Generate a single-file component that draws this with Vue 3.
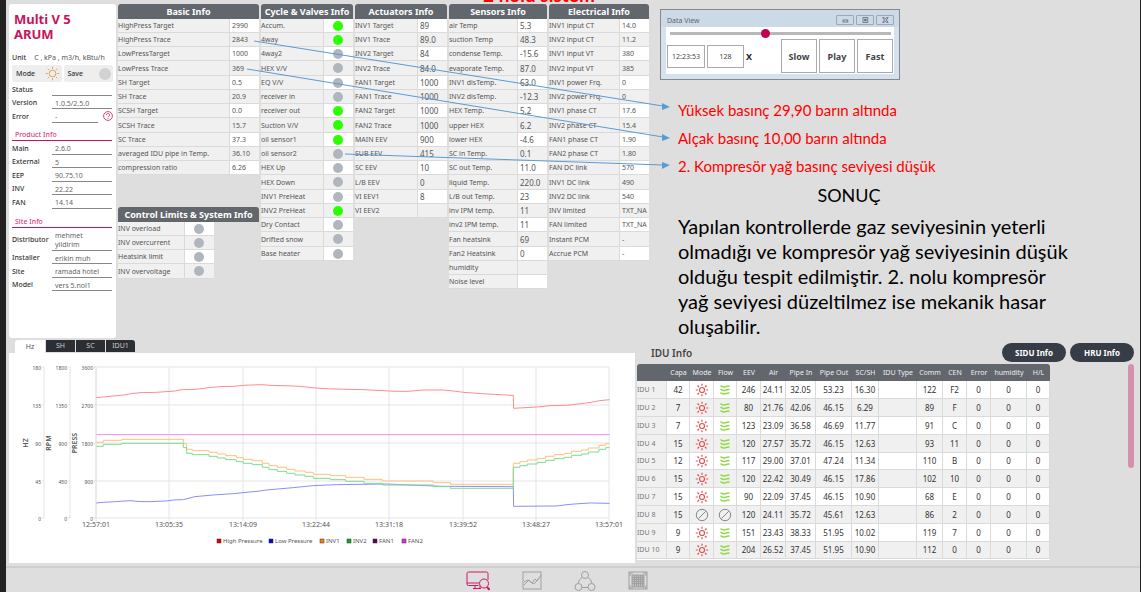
<script setup>
import { ref } from 'vue'

const unit = 'C , kPa , m3/h, kBtu/h'
const product = [['Main', '2.6.0'], ['External', '5'], ['EEP', '90.75.10'], ['INV', '22.22'], ['FAN', '14.14']]
const site = [['Distributor', 'mehmet\nyildirim'], ['Installer', 'erikin muh'], ['Site', 'ramada hotel'], ['Model', 'vers 5.nol1']]

const basic = [
  ['HighPress Target', '2990'], ['HighPress Trace', '2843'], ['LowPressTarget', '1000'], ['LowPress Trace', '369'],
  ['SH Target', '0.5'], ['SH Trace', '20.9'], ['SCSH Target', '0.0'], ['SCSH Trace', '15.7'], ['SC Trace', '37.3'],
  ['averaged IDU pipe in Temp.', '36.10'], ['compression ratio', '6.26']
]
const limits = [['INV overload', false], ['INV overcurrent', false], ['Heatsink limit', false], ['INV overvoltage', false]]
const cycle = [
  ['Accum.', true], ['4way', true], ['4way2', false], ['HEX V/V', false], ['EQ V/V', false], ['receiver in', false],
  ['receiver out', true], ['Suction V/V', true], ['oil sensor1', true], ['oil sensor2', false], ['HEX Up', false],
  ['HEX Down', false], ['INV1 PreHeat', false], ['INV2 PreHeat', true], ['Dry Contact', false],
  ['Drifted snow', false], ['Base heater', false]
]
const actuators = [
  ['INV1 Target', '89'], ['INV1 Trace', '89.0'], ['INV2 Target', '84'], ['INV2 Trace', '84.0'], ['FAN1 Target', '1000'],
  ['FAN1 Trace', '1000'], ['FAN2 Target', '1000'], ['FAN2 Trace', '1000'], ['MAIN EEV', '900'], ['SUB EEV', '415'],
  ['SC EEV', '10'], ['L/B EEV', '0'], ['VI EEV1', '8'], ['VI EEV2', '']
]
const sensors = [
  ['air Temp', '5.3'], ['suction Temp', '48.3'], ['condense Temp.', '-15.6'], ['evaporate Temp.', '87.0'],
  ['INV1 disTemp.', '63.0'], ['INV2 disTemp.', '-12.3'], ['HEX Temp.', '5.2'], ['upper HEX', '6.2'], ['lower HEX', '-4.6'],
  ['SC in Temp.', '0.1'], ['SC out Temp.', '11.0'], ['liquid Temp.', '220.0'], ['L/B out Temp.', '23'],
  ['inv IPM temp.', '11'], ['inv2 IPM temp.', '11'], ['Fan heatsink', '69'], ['Fan2 Heatsink', '0'], ['humidity', ''], ['Noise level', '']
]
const electrical = [
  ['INV1 input CT', '14.0'], ['INV2 input CT', '11.2'], ['INV1 input VT', '380'], ['INV2 input VT', '385'],
  ['INV1 power Frq.', '0'], ['INV2 power Frq.', '0'], ['INV1 phase CT', '17.6'], ['INV2 phase CT', '15.4'],
  ['FAN1 phase CT', '1.90'], ['FAN2 phase CT', '1.80'], ['FAN DC link', '570'], ['INV1 DC link', '490'],
  ['INV2 DC link', '540'], ['INV limited', 'TXT_NA'], ['FAN limited', 'TXT_NA'], ['Instant PCM', '-'], ['Accrue PCM', '-']
]
const groups = [
  { cls: 'basic', parts: [{ title: 'Basic Info', rows: basic }, { title: 'Control Limits & System Info', rows: limits, narrow: true }] },
  { cls: 'cycle', parts: [{ title: 'Cycle & Valves Info', rows: cycle }] },
  { cls: 'actuators', parts: [{ title: 'Actuators Info', rows: actuators }] },
  { cls: 'sensors', parts: [{ title: 'Sensors Info', rows: sensors }] },
  { cls: 'electrical', parts: [{ title: 'Electrical Info', rows: electrical }] }
]

const iduColumns = ['', 'Capa', 'Mode', 'Flow', 'EEV', 'Air', 'Pipe In', 'Pipe Out', 'SC/SH', 'IDU Type', 'Comm', 'CEN', 'Error', 'humidity', 'H/L']
const idu = [
  ['42', 1, '246', '24.11', '32.05', '53.23', '16.30', '122', 'F2'],
  ['7', 1, '80', '21.76', '42.06', '46.15', '6.29', '89', 'F'],
  ['7', 1, '123', '23.09', '36.58', '46.69', '11.77', '91', 'C'],
  ['15', 1, '120', '27.57', '35.72', '46.15', '12.63', '93', '11'],
  ['12', 1, '117', '29.00', '37.01', '47.24', '11.34', '110', 'B'],
  ['15', 1, '120', '22.42', '30.49', '46.15', '17.86', '102', '10'],
  ['15', 1, '90', '22.09', '37.45', '46.15', '10.90', '68', 'E'],
  ['15', 0, '120', '24.11', '35.72', '45.61', '12.63', '86', '2'],
  ['9', 1, '151', '23.43', '38.33', '51.95', '10.02', '119', '7'],
  ['9', 1, '204', '26.52', '37.45', '51.95', '10.90', '112', '0']
]

const tabs = ['Hz', 'SH', 'SC', 'IDU1']
const activeTab = ref('Hz')
const position = ref(43)
const time = ref('12:23:53')
const speed = ref('128')

const gridX = [96, 169, 243, 316, 389, 463, 536, 609]
const times = ['12:57:01', '13:05:35', '13:14:09', '13:22:44', '13:31:18', '13:39:52', '13:48:27', '13:57:01']
const gridY = [367, 405, 443, 481, 518]
const axes = [
  { x: 44, labels: ['180', '135', '90', '45', '0'], title: 'HZ', tx: 28 },
  { x: 70, labels: ['1800', '1350', '900', '450', '0'], title: 'RPM', tx: 51 },
  { x: 96, labels: ['3600', '2700', '1800', '900', '0'], title: 'PRESS', tx: 77 }
]
const legend = [
  ['High Pressure', '#e00000', 217], ['Low Pressure', '#0000f0', 269], ['INV1', '#ff8000', 320],
  ['INV2', '#00b030', 347], ['FAN1', '#5a0060', 373], ['FAN2', '#e82ce8', 402]
]
const high = '289,188 330,184 365,181 395,176 420,173 470,172 525,168 545,164 590,163 625,158 660,155 700,154 730,151 785,149 810,151 880,153 910,155 945,159 995,162 1090,164 1150,167 1185,169 1225,169 1270,165 1330,165 1360,168 1390,172 1460,177 1540,181 1541,220 1610,216 1650,212 1700,211 1760,204 1800,197 1829,194'
const low = '289,504 310,502 350,500 390,497 420,500 450,500 500,498 520,495 550,494 585,485 640,480 700,476 780,468 800,465 880,458 940,452 1010,449 1160,447 1250,451 1330,454 1540,455 1541,514 1670,513 1710,508 1770,504 1829,505'
const steps = [
  [289, 322], [310, 316], [365, 313], [550, 326], [560, 343], [577, 347], [627, 352], [652, 357], [677, 362], [709, 368],
  [730, 373], [757, 377], [787, 385], [807, 392], [832, 397], [860, 403], [885, 408], [915, 412], [940, 418], [991, 422],
  [1037, 427], [1092, 433], [1147, 438], [1300, 443], [1351, 448], [1540, 385], [1560, 380], [1582, 375], [1612, 370],
  [1637, 364], [1663, 359], [1693, 355], [1715, 349], [1745, 345], [1765, 339], [1797, 331], [1817, 326]
]
const stepPath = (dy) => steps.map(([x, y], i) => (i ? `H${x}V${y + dy}` : `M${x} ${y + dy}`)).join('') + 'H1829'
</script>

<template>
  <div class="page">
    <main>
      <div class="top">
        <aside class="side">
          <h1>Multi V 5<br />ARUM</h1>
          <p class="unit"><b>Unit</b><span>{{ unit }}</span></p>
          <div class="modes">
            <button type="button">Mode
              <svg class="sun" viewBox="0 0 16 16"><circle cx="8" cy="8" r="3.6" /><path d="M8 .8V3M8 13v2.200M.8 8H3M13 8h2.200M2.900 2.900l1.500 1.500M11.600 11.600l1.500 1.500M13.100 2.900l-1.500 1.500M4.400 11.600l-1.500 1.500" /></svg>
            </button>
            <button type="button">Save <i class="save-dot"></i></button>
          </div>
          <dl>
            <div><dt>Status</dt><dd></dd></div>
            <div><dt>Version</dt><dd>1.0.5/2.5.0</dd></div>
            <div class="error"><dt>Error</dt><dd>-</dd>
              <button type="button" class="help" aria-label="Error help"><svg viewBox="0 0 10 10"><circle cx="5" cy="5" r="4.400" /><path d="M3.500 4a1.500 1.500 0 1 1 2.300 1.200Q5 5.600 5 6.300M5 7.200v.8" /></svg></button>
            </div>
          </dl>
          <h2>Product Info</h2>
          <dl>
            <div v-for="r in product" :key="r[0]"><dt>{{ r[0] }}</dt><dd>{{ r[1] }}</dd></div>
          </dl>
          <h2 class="site-title">Site Info</h2>
          <dl class="site">
            <div v-for="r in site" :key="r[0]"><dt>{{ r[0] }}</dt><dd>{{ r[1] }}</dd></div>
          </dl>
        </aside>

        <div v-for="g in groups" :key="g.cls" class="group" :class="g.cls">
          <section v-for="p in g.parts" :key="p.title" :class="{ narrow: p.narrow }">
            <h2>{{ p.title }}</h2>
            <table>
              <tbody>
                <tr v-for="r in p.rows" :key="r[0]">
                  <th scope="row">{{ r[0] }}</th>
                  <td v-if="typeof r[1] === 'boolean'"><i class="lamp" :class="{ on: r[1] }"></i></td>
                  <td v-else>{{ r[1] }}</td>
                </tr>
              </tbody>
            </table>
          </section>
        </div>

        <div class="notes">
          <section class="window">
            <header>
              <span>Data View</span>
              <button type="button" aria-label="Minimize"><svg viewBox="0 0 18 10"><rect x="6.500" y="5" width="6" height="2.500" /></svg></button>
              <button type="button" aria-label="Maximize"><svg viewBox="0 0 18 10"><rect x="6.500" y="2" width="6" height="6" /><rect x="8.500" y="4" width="2" height="2" /></svg></button>
              <button type="button" aria-label="Close"><svg viewBox="0 0 18 10"><path d="M6 2h2l1.500 2L11 2h2l-2.300 3L13 8h-2L9.500 6 8 8H6l2.300-3z" /></svg></button>
            </header>
            <div class="pane">
              <input v-model="position" type="range" min="0" max="100" aria-label="Playback position" />
              <div class="controls">
                <input v-model="time" type="text" aria-label="Time" />
                <input id="speed" v-model="speed" type="text" aria-label="Speed" />
                <label for="speed">X</label>
                <button type="button">Slow</button>
                <button type="button">Play</button>
                <button type="button">Fast</button>
              </div>
            </div>
          </section>
          <ul>
            <li>Yüksek basınç 29,90 barın altında</li>
            <li>Alçak basınç 10,00 barın altında</li>
            <li>2. Kompresör yağ basınç seviyesi düşük</li>
          </ul>
          <h3>SONUÇ</h3>
          <p>Yapılan kontrollerde gaz seviyesinin yeterli<br />olmadığı ve kompresör yağ seviyesinin düşük<br />olduğu tespit edilmiştir. 2. nolu kompresör<br />yağ seviyesi düzeltilmez ise mekanik hasar<br />oluşabilir.</p>
        </div>

        <svg class="arrows" viewBox="0 0 1134 338" preserveAspectRatio="none">
          <path class="line" d="M248 41L657 106M241 69L657 137M339 154L657 165" />
          <path class="head" d="M664 107l-8-4v7zM664 138l-8-4v7zM664 165l-8-3v7z" />
        </svg>
        <div class="caption">2 nolu sistem</div>
      </div>

      <div class="bottom">
        <section class="trend">
          <nav>
            <button v-for="t in tabs" :key="t" type="button" :class="{ active: t === activeTab }" @click="activeTab = t">{{ t }}</button>
          </nav>
          <svg class="chart" viewBox="9 353 626 210">
            <g class="grid">
              <path v-for="x in gridX" :key="'x' + x" :d="`M${x} 367V521`" />
              <path v-for="y in gridY" :key="'y' + y" :d="`M94 ${y}H609`" />
            </g>
            <g v-for="a in axes" :key="a.title">
              <path class="axis" :d="`M${a.x} 367V518`" />
              <path v-for="y in gridY" :key="y" class="axis" :d="`M${a.x - 2} ${y}h2`" />
              <text v-for="(l, i) in a.labels" :key="i" class="tick" :x="a.x - 3" :y="gridY[i] + 3">{{ l }}</text>
              <text class="name" :transform="`translate(${a.tx} 443) rotate(-90)`">{{ a.title }}</text>
            </g>
            <text v-for="(t, i) in times" :key="i" class="time" :x="gridX[i]" y="527">{{ t }}</text>
            <g class="series" transform="translate(0 335) scale(.3333)">
              <polyline :points="high" stroke="#ff8c8c" />
              <path d="M289 299H1829" stroke="#f08cf0" />
              <path :d="stepPath(0)" stroke="#ffc07c" />
              <polyline :points="low" stroke="#8c8cff" />
              <path :d="stepPath(12)" stroke="#7cdc94" />
            </g>
            <g v-for="l in legend" :key="l[0]">
              <rect :x="l[2]" y="539" width="4" height="4" :fill="l[1]" stroke="#333" stroke-width=".5" />
              <text class="key" :x="l[2] + 6" y="543">{{ l[0] }}</text>
            </g>
          </svg>
        </section>

        <section class="idu">
          <header>
            <h2>IDU Info</h2>
            <button type="button">SIDU Info</button>
            <button type="button">HRU Info</button>
          </header>
          <div class="scroller">
            <table>
              <colgroup><col v-for="(c, i) in iduColumns" :key="i" :class="'c' + i" /></colgroup>
              <thead><tr><th v-for="c in iduColumns" :key="c" scope="col">{{ c }}</th></tr></thead>
              <tbody>
                <tr v-for="(r, i) in idu" :key="i">
                  <th scope="row">IDU {{ i + 1 }}</th>
                  <td>{{ r[0] }}</td>
                  <td>
                    <svg v-if="r[1]" class="heat" viewBox="0 0 14 14"><circle cx="7" cy="7" r="2.500" /><path d="M7 .8v2M7 11.200v2M.8 7h2M11.200 7h2M2.500 2.500l1.500 1.500M10 10l1.500 1.500M11.500 2.500L10 4M4 10l-1.500 1.500" /></svg>
                    <svg v-else class="off" viewBox="0 0 14 14"><circle cx="7" cy="7" r="5.700" /><path d="M3.500 10.500l7-7" /></svg>
                  </td>
                  <td>
                    <svg v-if="r[1]" class="flow" viewBox="0 0 14 14"><path d="M2.500 2.500q2 2.200 4.500 1.300t4.500-.8M2.500 6q2 2.200 4.500 1.300t4.500-.8M2.500 9.500q2 2.200 4.500 1.300t4.500-.8" /></svg>
                    <svg v-else class="off" viewBox="0 0 14 14"><circle cx="7" cy="7" r="5.700" /><path d="M3.500 10.500l7-7" /></svg>
                  </td>
                  <td>{{ r[2] }}</td><td>{{ r[3] }}</td><td>{{ r[4] }}</td><td>{{ r[5] }}</td><td>{{ r[6] }}</td>
                  <td></td><td>{{ r[7] }}</td><td>{{ r[8] }}</td><td>0</td><td>0</td><td>0</td>
                </tr>
              </tbody>
            </table>
            <i class="thumb"></i>
          </div>
        </section>
      </div>
    </main>

    <footer>
      <button type="button" class="current" aria-label="Monitoring"><svg viewBox="0 0 24 20"><path d="M12.500 14.500H2.500a1.500 1.500 0 0 1-1.500-1.500V2.500A1.500 1.500 0 0 1 2.500 1h18A1.500 1.500 0 0 1 22 2.500V9M1 12h12M9 14.500v3M14 14.500v3M7 17.500h8" /><circle cx="18" cy="12.500" r="4.500" /><path d="M21 16l2.500 2.800" stroke-width="2" /></svg></button>
      <button type="button" aria-label="Trend graph"><svg viewBox="0 0 20 20"><rect x="1" y="1" width="18" height="17" /><path d="M2 11l4-2 4 3 3-4 2 2 4-6M2 14l5-5 4 4 2-1 4-5" /></svg></button>
      <button type="button" aria-label="Cycle diagram"><svg viewBox="0 0 22 20"><circle cx="11" cy="4" r="3.500" /><circle cx="4.500" cy="16" r="3.500" /><circle cx="17.500" cy="16" r="3.500" /><path d="M8 6.500Q4.500 8.500 4 12.500M14 6.500q3.500 2 4 6M8 16.500h6" /></svg></button>
      <button type="button" aria-label="Control board"><svg viewBox="0 0 20 20"><rect x="1" y="1" width="18" height="17" /><rect x="4" y="4" width="12" height="12" fill="#c0c0c0" /><path d="M6.500 4v12M8.500 4v12M10.500 4v12M12.500 4v12M14.500 4v12M4 6.500h12M4 8.500h12M4 10.500h12M4 12.500h12M2 5V2h3M15 2h3v3M18 14v3h-3M5 17H2v-3" /></svg></button>
    </footer>
  </div>
</template>

<style>
body { margin: 0; background: #dedede; }
</style>

<style scoped>
* { box-sizing: border-box; }
.page { min-height: 100vh; display: flex; flex-direction: column; border-left: 6px solid #222; border-right: 1px solid #222; background: #dedede; font-family: "Noto Sans", sans-serif; font-size: 7px; color: #555; overflow: hidden; }
button, input { font: inherit; color: inherit; padding: 0; margin: 0; border: 0; background: none; }
h1, h2, h3, p, ul, dl, dd { margin: 0; padding: 0; }
svg { display: block; fill: none; }
.top { position: relative; display: grid; grid-template-columns: 107fr 141fr 92fr 92fr 98fr 100fr 489fr; align-items: start; gap: 2px; padding: 4px 0 0 3px; }

.side { background: #fff; border-radius: 3px; padding: 8px 3px; min-height: 334px; color: #333; }
.side h1 { font-size: 13px; line-height: 15px; color: #c8145c; padding-left: 2px; }
.unit { display: flex; gap: 8px; margin-top: 8px; line-height: 15px; white-space: nowrap; font-size: 7px; }
.unit b { font-weight: 500; }
.unit span { color: #555; }
.modes { display: grid; grid-template-columns: 1fr 1fr; gap: 2px; }
.modes button { height: 17px; background: #eee; border-radius: 2px; display: flex; align-items: center; justify-content: space-between; padding: 0 2px 0 4px; font-weight: 500; }
.sun { width: 15px; height: 15px; stroke: #e0a050; stroke-width: 1; }
.save-dot { width: 12px; height: 12px; border-radius: 50%; background: #d2d2d2; }
.side dl > div { display: flex; align-items: center; height: 14px; }
.side dl > div:nth-child(even) { height: 13px; }
.side dt { width: 40px; font-weight: 500; flex: none; font-size: 7px; }
.side dd { flex: 1; align-self: stretch; margin-right: 1px; border-bottom: 1px solid #888; padding: 3px 0 0 3px; line-height: 9px; color: #666; white-space: pre-line; }
.side .error dd { margin-right: 5px; }
.help { width: 10px; height: 10px; }
.help svg { stroke: #c8145c; stroke-width: .8; }
.side h2 { margin: 7px 1px 0 0; padding-left: 3px; font-size: 7px; line-height: 10px; font-weight: 500; color: #d8407c; border-bottom: 1px solid #c8145c; }
.side .site-title { margin-top: 8px; }
.side .site > div:first-child { height: 23px; }

.group section { margin-bottom: 32px; }
.group section:last-child { margin-bottom: 0; }
.group h2 { background: #62666d; color: #fff; font-size: 9px; line-height: 15px; font-weight: 700; text-align: center; border-radius: 3px 3px 0 0; white-space: nowrap; }
table { border-collapse: separate; border-spacing: 0; table-layout: fixed; width: 100%; }
.group tr { height: 14px; }
.group tr:nth-child(4n) { height: 15px; }
.group th, .group td { padding: 0; font-size: 7px; line-height: 13px; font-weight: 400; text-align: left; white-space: nowrap; background: #f0f0f0; border-bottom: 1px solid #dadada; }
.group td { width: 30px; padding-left: 2px; border-left: 1px solid #dadada; }
.actuators td, .sensors td { font-size: 8px; }
.group tr:nth-child(odd) td { background: #fff; }
.group .narrow table { width: 68%; }
.lamp { display: block; width: 10px; height: 10px; margin-left: 7px; border-radius: 50%; background: #b0b6be; }
.lamp.on { background: #2cff00; }

.notes { padding: 5px 0 0 9px; font-family: Lato, sans-serif; color: #000; }
.window { width: 240px; height: 71px; border: 1px solid #888; background: #d4e2f0; padding: 0 5px 5px; font-family: "Noto Sans", sans-serif; color: #444; }
.window header { display: flex; align-items: center; gap: 2px; height: 17px; padding-top: 3px; background: #ccd9e6; margin: 0 -5px; padding-right: 5px; }
.window header span { flex: 1; padding-left: 6px; color: #666; }
.window header button { width: 18px; height: 10px; border: 1px solid #9aa8b8; border-radius: 1px; }
.window header svg { stroke: #667; stroke-width: 1; width: 16px; height: 8px; }
.pane { background: #fff; height: 47px; padding: 0 1px; }
.pane input[type="range"] { display: block; appearance: none; width: 221px; height: 12px; margin-left: 3px; background: linear-gradient(#b8b8b8, #b8b8b8) center / 100% 3px no-repeat; }
.pane input[type="range"]::-webkit-slider-thumb { appearance: none; width: 9px; height: 9px; border-radius: 50%; background: #c00050; }
.controls { display: flex; align-items: center; gap: 2px; }
.controls input { width: 38px; height: 23px; border: 1px solid #aaa; text-align: center; }
.controls input + input { width: 37px; }
.controls label { font-size: 9px; font-weight: 700; color: #222; margin-right: auto; }
.controls button { width: 36px; height: 34px; border: 1px solid #aaa; font-size: 9px; font-weight: 700; color: #444; }
.notes ul { list-style: none; margin-top: 16px; padding-left: 18px; color: #f00; font-size: 15px; line-height: 28px; white-space: nowrap; }
.notes h3 { width: 378px; font-size: 18px; line-height: 28px; font-weight: 400; text-align: center; margin-top: 1px; }
.notes p { padding-left: 18px; margin-top: 5px; font-size: 20px; line-height: 25px; white-space: nowrap; }
.arrows { position: absolute; inset: 0; width: 100%; height: 338px; pointer-events: none; }
.arrows .line { stroke: #5b9bd5; stroke-width: 1; }
.arrows .head { fill: #5b9bd5; }
.caption { position: absolute; top: -17px; left: 477px; font: 700 19px/24px Lato, sans-serif; color: #f00; white-space: nowrap; }

.bottom { display: grid; grid-template-columns: 626fr 501fr; gap: 2px; padding: 1px 2px 0 3px; }
.trend nav { display: flex; gap: 1px; height: 13px; padding-left: 6px; }
.trend nav button { width: 29px; height: 12px; background: #2b2f33; color: #ccc; line-height: 12px; margin-bottom: 1px; }
.trend nav .active { width: 30px; height: 13px; background: #fff; color: #555; border-radius: 3px 0 0; }
.trend nav button:last-child { border-radius: 0 3px 0 0; }
.chart { width: 100%; height: auto; background: #fff; }
.chart .grid, .chart .axis { stroke: #e4e4e4; stroke-width: 1; }
.chart text { fill: #555; font-size: 6px; }
.chart .tick { text-anchor: end; font-size: 5px; }
.chart .name { text-anchor: middle; font-size: 7px; font-weight: 600; }
.chart .time { text-anchor: middle; font-size: 7px; }
.chart .series { stroke-width: 3; }

.idu header { display: flex; align-items: center; gap: 4px; padding: 3px 4px 2px 14px; }
.idu h2 { flex: 1; font-size: 10px; line-height: 18px; font-weight: 600; color: #444; }
.idu header button { width: 64px; height: 19px; border-radius: 10px; background: #373d47; color: #fff; font-size: 8px; font-weight: 700; }
.scroller { display: flex; justify-content: space-between; padding-right: 4px; }
.scroller table { width: 413px; border-bottom: 1px solid #fff; }
.thumb { width: 6px; height: 104px; border-radius: 3px; background: #d78fae; }
.idu thead th { height: 17px; padding: 0; background: #62666d; color: #eee; font-size: 7px; font-weight: 400; white-space: nowrap; }
.idu thead th:first-child { border-radius: 3px 0 0; }
.idu thead th:last-child { border-radius: 0 3px 0 0; }
.idu tbody tr { height: 18px; }
.idu tbody tr:nth-child(5n) { height: 17px; }
.idu tbody th, .idu tbody td { padding: 0; font-size: 8px; line-height: 12px; text-align: center; color: #333; background: #fff; border-bottom: 1px solid #dadada; border-right: 1px solid #dadada; }
.idu tbody tr:nth-child(even) td { background: #f0f0f0; }
.idu tbody th { background: #f0f0f0; color: #777; font-weight: 400; font-size: 7px; text-align: left; }
.idu td svg { width: 14px; height: 14px; margin: 0 auto; }
.heat { stroke: #e05050; stroke-width: 1.2; }
.flow { stroke: #90d840; stroke-width: 1.4; }
.off { stroke: #888; stroke-width: 1; }
.c0, .c6 { width: 30px; }
.c1, .c3, .c14 { width: 23px; }
.c2, .c4, .c11, .c12 { width: 24px; }
.c5 { width: 25px; }
.c7, .c13 { width: 36px; }
.c8 { width: 27px; }
.c9 { width: 38px; }
.c10 { width: 26px; }

footer { margin-top: 3px; flex: 1; display: flex; justify-content: center; align-items: flex-start; gap: 31px; padding: 3px 31px 0 0; border-top: 2px solid #cecece; }
footer button { width: 22px; height: 20px; }
footer .current { width: 24px; }
footer svg { height: 20px; margin: 0 auto; stroke: #a0a0a0; stroke-width: 1; }
footer .current svg { stroke: #d01860; }
</style>
